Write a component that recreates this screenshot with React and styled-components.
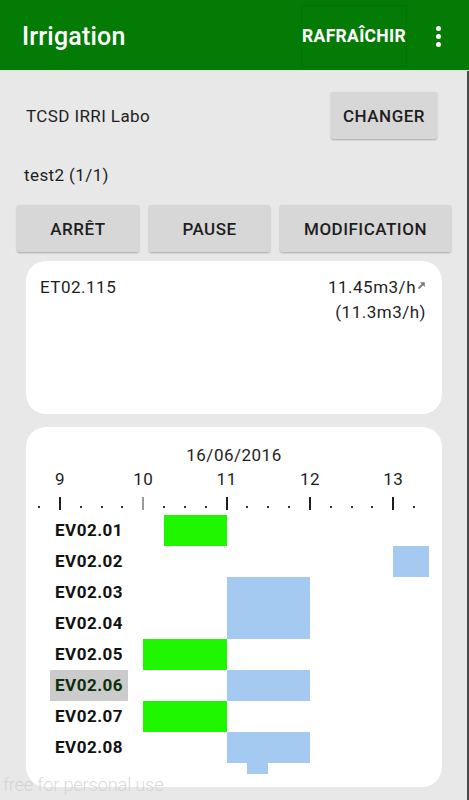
import React from 'react';
import styled, { createGlobalStyle } from 'styled-components';

const GREEN = '#047b04';
const BAR_GREEN = '#1ef700';
const BAR_BLUE = '#a5caf1';

const START_HOUR = 9;
const HOUR_PX = 83.33;
const AXIS_LEFT = 34;

const hourX = (h) => AXIS_LEFT + (h - START_HOUR) * HOUR_PX;

const ROWS = [
  { id: 'EV02.01', bars: [{ from: 10.25, to: 11, kind: 'run' }] },
  { id: 'EV02.02', bars: [{ from: 13, to: 13.43, kind: 'plan' }] },
  { id: 'EV02.03', bars: [{ from: 11, to: 12, kind: 'plan' }] },
  { id: 'EV02.04', bars: [{ from: 11, to: 12, kind: 'plan' }] },
  { id: 'EV02.05', bars: [{ from: 10, to: 11, kind: 'run' }] },
  { id: 'EV02.06', bars: [{ from: 11, to: 12, kind: 'plan' }], selected: true },
  { id: 'EV02.07', bars: [{ from: 10, to: 11, kind: 'run' }] },
  { id: 'EV02.08', bars: [{ from: 11, to: 12, kind: 'plan' }] },
  { id: 'EV02.09', bars: [{ from: 11.25, to: 11.5, kind: 'plan' }], hidden: true },
];

const HOURS = [9, 10, 11, 12, 13];

const GlobalStyle = createGlobalStyle`
  html, body {
    margin: 0;
    padding: 0;
    background: #e8e8e8;
  }
  body {
    font-family: Roboto, "Liberation Sans", sans-serif;
    color: #1e1e1e;
  }
`;

const Screen = styled.div`
  position: relative;
  width: 469px;
  height: 800px;
  overflow: hidden;
  background: #e8e8e8;
  display: flex;
  flex-direction: column;
`;

const AppBar = styled.header`
  height: 70px;
  flex-shrink: 0;
  background: ${GREEN};
  display: flex;
  align-items: center;
  padding-left: 22px;
  border-bottom: 1px solid #d8e6d8;
`;

const Title = styled.h1`
  margin: 3px 0 0;
  flex: 1;
  font-size: 25px;
  font-weight: 500;
  color: #fff;
  letter-spacing: 0.2px;
`;

const RefreshAction = styled.button`
  width: 106px;
  height: 62px;
  margin-top: 1px;
  padding: 0;
  border: 1px solid rgba(0, 0, 0, 0.07);
  background: transparent;
  color: #fff;
  font-family: Roboto, sans-serif;
  font-size: 17.5px;
  font-weight: 700;
  letter-spacing: 0.3px;
`;

const Overflow = styled.div`
  width: 62px;
  height: 70px;
  display: flex;
  flex-direction: column;
  align-items: center;
  justify-content: center;
  gap: 3px;
  padding-top: 2px;

  & > span {
    width: 5px;
    height: 5px;
    border-radius: 50%;
    background: #fff;
  }
`;

const Body = styled.main`
  flex: 1;
  display: flex;
  flex-direction: column;
  border-right: 2px solid #4a4a4a;
`;

const SiteRow = styled.div`
  display: flex;
  align-items: center;
  justify-content: space-between;
  margin-top: 21px;
  padding: 0 30px 0 26px;
  font-size: 17px;
  letter-spacing: 0.4px;
`;

const RaisedButton = styled.button`
  height: 47px;
  width: ${(p) => p.$w}px;
  padding: 0;
  border: none;
  border-radius: 2px;
  background: #d7d7d7;
  box-shadow: 0 1px 2px rgba(0, 0, 0, 0.28);
  font-family: Roboto, sans-serif;
  font-size: 17px;
  font-weight: 500;
  letter-spacing: 0.5px;
  color: #1e1e1e;
`;

const Program = styled.div`
  margin: 25px 0 0 24px;
  height: 22px;
  line-height: 22px;
  font-size: 17px;
  letter-spacing: 0.4px;
`;

const ActionRow = styled.div`
  display: flex;
  gap: 10px;
  margin-top: 19px;
  padding-left: 17px;
`;

const Card = styled.section`
  margin: ${(p) => p.$gap}px 25px 0 26px;
  height: ${(p) => p.$h}px;
  background: #fff;
  border-radius: 20px;
  overflow: hidden;
  position: relative;
`;

const StationBody = styled.div`
  display: flex;
  justify-content: space-between;
  padding: 14px 16px 0 14px;
  font-size: 17px;
  letter-spacing: 0.5px;
  line-height: 25px;
`;

const Flow = styled.div`
  text-align: right;
`;

const FlowLine = styled.div`
  display: flex;
  align-items: center;
  justify-content: flex-end;

  & > svg {
    margin-left: 1px;
    margin-bottom: 5px;
  }
`;

const DateLabel = styled.div`
  padding-top: 17px;
  height: 20px;
  line-height: 20px;
  text-align: center;
  font-size: 17px;
  letter-spacing: 0.5px;
  margin-top: 1px;
`;

const Axis = styled.div`
  position: relative;
  height: 50px;
`;

const HourLabel = styled.span`
  position: absolute;
  top: 4px;
  width: 30px;
  margin-left: -15px;
  text-align: center;
  font-size: 17px;
  letter-spacing: 0.5px;
  line-height: 20px;
`;

const Tick = styled.span`
  position: absolute;
  top: 32px;
  width: 2px;
  height: 13px;
  margin-left: -1px;
  background: ${(p) => (p.$faded ? '#9a9a9a' : '#1e1e1e')};
`;

const Dot = styled.span`
  position: absolute;
  top: 41px;
  width: 2px;
  height: 2px;
  margin-left: -1px;
  background: #333;
`;

const Rows = styled.div`
  height: 259px;
  overflow: hidden;
`;

const Row = styled.div`
  position: relative;
  height: 31px;
  display: flex;
  align-items: center;
`;

const Label = styled.span`
  position: relative;
  z-index: 1;
  margin-left: 24px;
  padding: 0 5px;
  height: 31px;
  line-height: 31px;
  font-size: 17px;
  font-weight: 700;
  letter-spacing: 0.5px;
  color: ${(p) => (p.$selected ? '#0b2f0b' : '#111')};
  background: ${(p) => (p.$selected ? '#cbcbcb' : 'transparent')};
`;

const Bar = styled.span`
  position: absolute;
  top: 0;
  height: 31px;
  background: ${(p) => (p.$kind === 'run' ? BAR_GREEN : BAR_BLUE)};
`;

const Watermark = styled.div`
  position: absolute;
  left: 3px;
  top: 774px;
  font-size: 18.5px;
  font-weight: 300;
  letter-spacing: -0.3px;
  color: rgba(205, 205, 205, 0.75);
  pointer-events: none;
`;

const TrendArrow = () => (
  <svg width="9" height="9" viewBox="0 0 9 9">
    <path d="M1.5 7.5 L6.5 2.5" stroke="#7a7a7a" strokeWidth="1.8" />
    <path d="M3 1.2 H7.8 V6 Z" fill="#7a7a7a" />
  </svg>
);

const Timeline = () => {
  const quarters = [];
  for (let q = -1; q <= 17; q += 1) {
    if (q % 4 !== 0) quarters.push(START_HOUR + q / 4);
  }
  return (
    <>
      <DateLabel>16/06/2016</DateLabel>
      <Axis>
        {HOURS.map((h) => (
          <HourLabel key={h} style={{ left: hourX(h) }}>{h}</HourLabel>
        ))}
        {HOURS.map((h) => (
          <Tick key={h} $faded={h === 10} style={{ left: hourX(h) }} />
        ))}
        {quarters.map((t) => (
          <Dot key={t} style={{ left: hourX(t) }} />
        ))}
      </Axis>
      <Rows>
        {ROWS.map((row) => (
          <Row key={row.id}>
            {!row.hidden && <Label $selected={row.selected}>{row.id}</Label>}
            {row.bars.map((b, i) => (
              <Bar
                key={i}
                $kind={b.kind}
                style={{ left: hourX(b.from), width: hourX(b.to) - hourX(b.from) }}
              />
            ))}
          </Row>
        ))}
      </Rows>
    </>
  );
};

const App = () => (
  <Screen>
    <GlobalStyle />
    <AppBar>
      <Title>Irrigation</Title>
      <RefreshAction>RAFRAÎCHIR</RefreshAction>
      <Overflow>
        <span />
        <span />
        <span />
      </Overflow>
    </AppBar>
    <Body>
      <SiteRow>
        <span>TCSD IRRI Labo</span>
        <RaisedButton $w={106}>CHANGER</RaisedButton>
      </SiteRow>
      <Program>test2 (1/1)</Program>
      <ActionRow>
        <RaisedButton $w={122}>ARRÊT</RaisedButton>
        <RaisedButton $w={121}>PAUSE</RaisedButton>
        <RaisedButton $w={171}>MODIFICATION</RaisedButton>
      </ActionRow>
      <Card $gap={9} $h={153}>
        <StationBody>
          <span>ET02.115</span>
          <Flow>
            <FlowLine>
              11.45m3/h
              <TrendArrow />
            </FlowLine>
            <div>(11.3m3/h)</div>
          </Flow>
        </StationBody>
      </Card>
      <Card $gap={13} $h={360}>
        <Timeline />
      </Card>
    </Body>
    <Watermark>free for personal use</Watermark>
  </Screen>
);

export default App;
